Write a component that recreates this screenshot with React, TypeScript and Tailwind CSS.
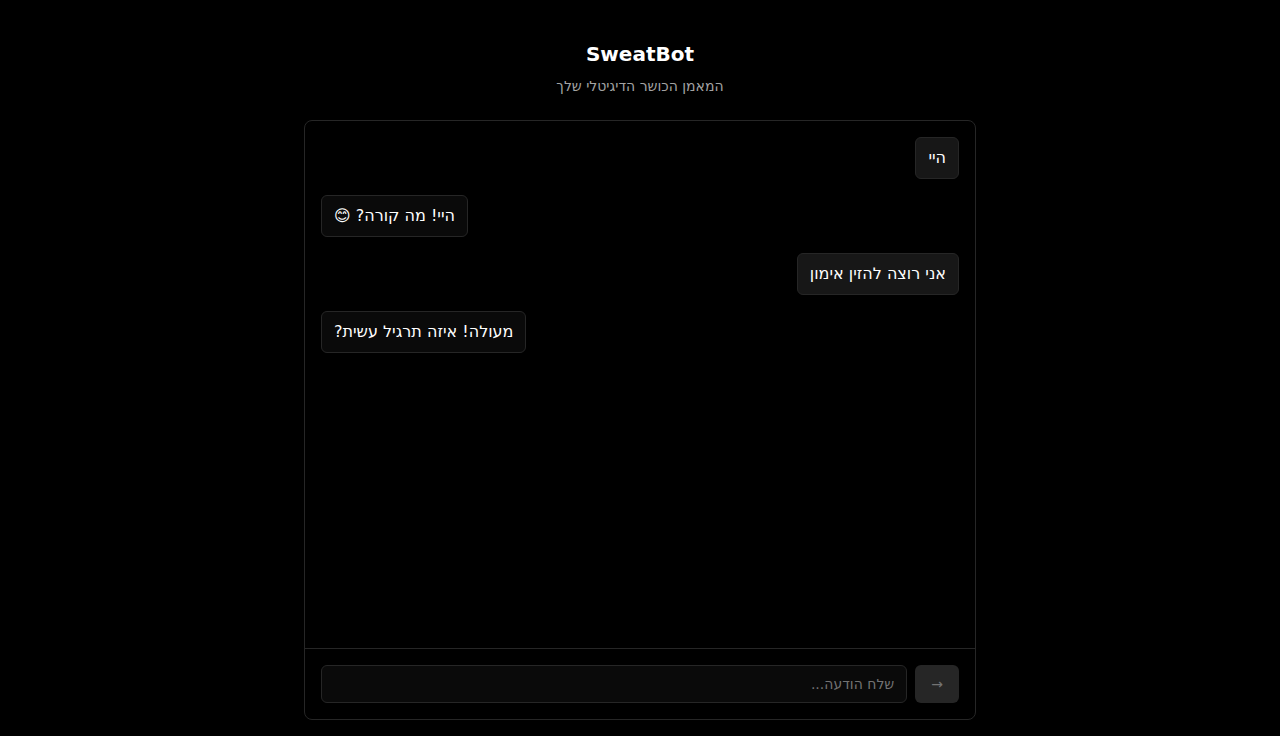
import { useState } from 'react';

type Message = { id: number; from: 'user' | 'bot'; text: string };

const messages: Message[] = [
  { id: 1, from: 'user', text: 'היי' },
  { id: 2, from: 'bot', text: 'היי! מה קורה? 😊' },
  { id: 3, from: 'user', text: 'אני רוצה להזין אימון' },
  { id: 4, from: 'bot', text: 'מעולה! איזה תרגיל עשית?' },
];

function Bubble({ message }: { message: Message }) {
  const user = message.from === 'user';
  return (
    <li className={user ? 'flex justify-start' : 'flex justify-end'}>
      <p
        className={
          user
            ? 'max-w-[80%] rounded-md border border-[#262626] bg-[#171717] px-3 py-2 leading-6'
            : 'max-w-[80%] rounded-md border border-[#262626] bg-[#0a0a0a] px-3 py-2 leading-6'
        }
      >
        {message.text}
      </p>
    </li>
  );
}

export default function App() {
  const [draft, setDraft] = useState('');
  return (
    <div dir="rtl" className="flex min-h-screen flex-col bg-black font-['DejaVu_Sans',sans-serif] text-base text-white">
      <main className="mx-auto flex w-full max-w-2xl grow flex-col pt-10 pb-4">
        <header className="mb-6 text-center">
          <h1 className="mb-2 text-xl leading-7 font-bold">SweatBot</h1>
          <p className="text-sm leading-5 text-[#a3a3a3]">המאמן הכושר הדיגיטלי שלך</p>
        </header>
        <section className="flex grow flex-col rounded-lg border border-[#262626]">
          <ul className="flex grow flex-col gap-4 p-4">
            {messages.map((m) => (
              <Bubble key={m.id} message={m} />
            ))}
          </ul>
          <form className="flex gap-2 border-t border-[#262626] p-4" onSubmit={(e) => e.preventDefault()}>
            <button
              type="submit"
              aria-label="שלח"
              disabled={!draft}
              className="rounded-md bg-[#262626] px-4 py-2 text-sm leading-5 text-[#737373]"
            >
              →
            </button>
            <input
              type="text"
              aria-label="הודעה"
              value={draft}
              onChange={(e) => setDraft(e.target.value)}
              placeholder="שלח הודעה..."
              className="h-[38px] min-w-0 grow rounded-md border border-[#262626] bg-[#0a0a0a] px-3 text-sm placeholder:text-[#737373]"
            />
          </form>
        </section>
      </main>
    </div>
  );
}
